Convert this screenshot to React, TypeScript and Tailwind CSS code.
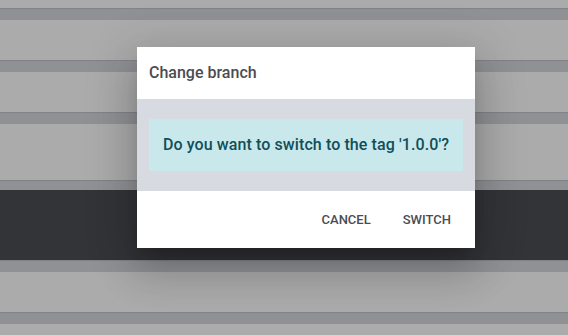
import React from 'react';

const rows: { h: string; kind: 'light' | 'band' | 'dark' }[] = [
  { h: 'h-[8px]', kind: 'light' },
  { h: 'h-[12px]', kind: 'band' },
  { h: 'h-[40px]', kind: 'light' },
  { h: 'h-[12px]', kind: 'band' },
  { h: 'h-[40px]', kind: 'light' },
  { h: 'h-[12px]', kind: 'band' },
  { h: 'h-[56px]', kind: 'light' },
  { h: 'h-[10px]', kind: 'band' },
  { h: 'h-[70px]', kind: 'dark' },
  { h: 'h-[12px]', kind: 'band' },
  { h: 'h-[40px]', kind: 'light' },
  { h: 'h-[12px]', kind: 'band' },
  { h: 'h-[11px]', kind: 'light' },
];

const kindClass = {
  light: 'bg-[#ababab]',
  band: 'bg-[#8f9195] border-t border-[#828388]',
  dark: 'bg-[#333438]',
};

export default function App() {
  return (
    <div
      className="relative w-[568px] h-[335px] overflow-hidden"
      style={{ fontFamily: 'Roboto, "Liberation Sans", sans-serif' }}
    >
      <div className="flex flex-col">
        {rows.map((r, i) => (
          <div key={i} className={`${r.h} ${kindClass[r.kind]}`} />
        ))}
      </div>

      <div className="absolute left-[137px] top-[47px] w-[338px] flex flex-col bg-white shadow-[0_11px_15px_-7px_rgba(0,0,0,0.2),0_24px_38px_3px_rgba(0,0,0,0.14),0_9px_46px_8px_rgba(0,0,0,0.12)]">
        <div className="h-[52px] flex items-center px-3">
          <h2 className="text-[16px] font-medium text-[#4b4c52] leading-none">Change branch</h2>
        </div>
        <div className="bg-[#d8dae1] px-3 py-5">
          <div className="h-[52px] bg-[#c9e8ec] flex items-center justify-center">
            <p className="text-[16px] font-medium text-[#0f4f58] tracking-[0.1px]">
              Do you want to switch to the tag '1.0.0'?
            </p>
          </div>
        </div>
        <div className="h-[57px] flex items-center justify-end pr-2">
          <button className="px-4 py-2 text-[13px] font-medium uppercase text-[#4b4c52]">
            Cancel
          </button>
          <button className="px-4 py-2 text-[13px] font-medium uppercase text-[#4b4c52]">
            Switch
          </button>
        </div>
      </div>
    </div>
  );
}
